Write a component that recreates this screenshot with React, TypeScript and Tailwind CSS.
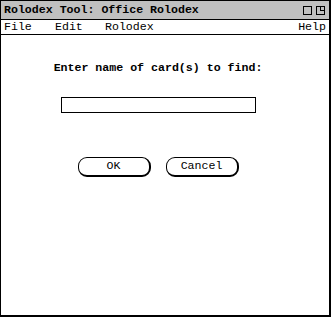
const mono = { fontFamily: '"Liberation Mono", "DejaVu Sans Mono", monospace' };

function Button({ label }: { label: string }) {
  return (
    <button className="w-[73px] h-[20px] bg-white border border-black border-r-2 border-b-2 rounded-[9px] text-[11.6px] leading-none text-black">
      {label}
    </button>
  );
}

export default function App() {
  return (
    <div
      className="w-[331px] h-[317px] bg-white border-l border-t border-r-2 border-b-2 border-black flex flex-col text-black"
      style={mono}
    >
      <div className="h-[19px] bg-[#c0c0c0] border-b border-black flex items-center justify-between pl-[3px] pr-[4px]">
        <span className="text-[11.6px] font-bold leading-none">Rolodex Tool: Office Rolodex</span>
        <div className="flex items-center gap-[4px]">
          <div className="w-[9px] h-[9px] border border-black" />
          <div className="w-[9px] h-[9px] border border-black relative">
            <div className="absolute top-0 right-0 w-[4px] h-[4px] border-l border-b border-black" />
          </div>
        </div>
      </div>
      <div className="h-[15px] border-b border-black flex items-center pl-[3px] pr-[3px] text-[11.6px] leading-none">
        <span className="w-[51px]">File</span>
        <span className="w-[50px]">Edit</span>
        <span>Rolodex</span>
        <span className="ml-auto">Help</span>
      </div>
      <div className="flex flex-col items-center pt-[27px] pr-[14px]">
        <div className="text-[11.6px] font-bold leading-none">Enter name of card(s) to find:</div>
        <div className="mt-[23px] w-[195px] h-[16px] border border-black" />
        <div className="mt-[44px] flex gap-[15px]">
          <Button label="OK" />
          <Button label="Cancel" />
        </div>
      </div>
    </div>
  );
}
